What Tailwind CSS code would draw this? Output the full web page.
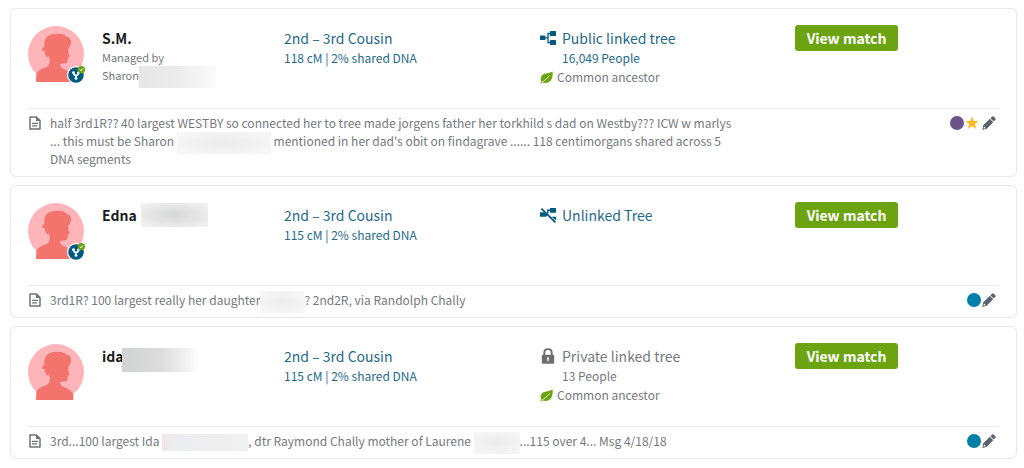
<!DOCTYPE html>
<html lang="en">

<head>
    <meta charset="UTF-8">
    <meta name="viewport" content="width=device-width, initial-scale=1.0">
    <title>DNA Matches</title>
    <script src="https://cdn.jsdelivr.net/npm/@tailwindcss/browser@4"></script>
</head>

<body class="bg-white font-['Noto_Sans_CJK_SC','Open_Sans',sans-serif] text-xs leading-[18px] text-[#75797e]">

    <!-- shared icons -->
    <svg class="hidden">
        <symbol id="icon-woman" viewBox="0 0 168 168">
            <clipPath id="avatar-clip">
                <circle cx="84" cy="84" r="84" />
            </clipPath>
            <circle cx="84" cy="84" r="84" fill="#fdb5ba" />
            <path clip-path="url(#avatar-clip)" fill="#f3736d"
                d="M84 24C99 22 110 26 116 32C126 34 131 42 129 52C129 60 123 63 121 69C120 75 121 80 122 84L125 91C124 94 120 94 120 96L119 101C118 106 118 110 113 112C107 114 100 112 97 114C94 122 104 128 112 131C124 136 132 142 136 150L136 168L24 168L25 143C30 133 44 127 56 123C64 119 65 112 65 105C65 100 65 96 62 91L58 95L54 89C50 85 51 79 50 75C45 76 42 74 41 71L46 70C42 69 42 64 47 64L50 63C48 56 48 46 53 38C59 28 71 24 84 24Z" />
        </symbol>
        <symbol id="icon-linked" viewBox="0 0 20 20">
            <circle cx="9" cy="11" r="9" fill="#fff" />
            <circle cx="9" cy="11" r="7.8" fill="#005a80" />
            <path d="M6.5 8.6Q6.6 11.2 9 11.6Q11.4 11.2 11.5 8.6M9 11V14.6" fill="none" stroke="#fff" stroke-width="1.6" />
            <circle cx="6.4" cy="8.6" r="1.4" fill="#fff" />
            <circle cx="11.6" cy="8.6" r="1.4" fill="#fff" />
            <circle cx="9" cy="14.4" r="1.4" fill="#fff" />
            <circle cx="14.4" cy="5.6" r="3.7" fill="#6ba410" />
            <path d="M12.9 5.8L14 6.8L16 4.5" fill="none" stroke="#fff" stroke-width="1" />
        </symbol>
        <symbol id="icon-tree" viewBox="0 0 16 14">
            <rect x="0" y="4.5" width="5.4" height="4.6" rx=".6" />
            <rect x="10" y="0" width="6" height="5" rx=".6" />
            <rect x="10" y="9" width="6" height="5" rx=".6" />
            <path d="M5 6.8H8M11 2.5H8V11.5H11" fill="none" stroke="currentColor" stroke-width="1.3" />
        </symbol>
        <symbol id="icon-unlinked" viewBox="0 0 16 16">
            <path d="M0 5.2H4L7.4 8.6L6 9.8H0.6Q0 9.8 0 9.2Z" />
            <rect x="10" y="1" width="6" height="4.8" rx=".6" />
            <path d="M11.6 9.8H15.4Q16 9.8 16 10.4V13.6Z" />
            <path d="M5.6 7H7.8M11 3.2H7.8V6.4" fill="none" stroke="currentColor" stroke-width="1.4" />
            <path d="M1.4 1.6L15.4 15.4" fill="none" stroke="currentColor" stroke-width="1.7" />
        </symbol>
        <symbol id="icon-lock" viewBox="0 0 14 16">
            <path d="M3.3 8V4.6Q3.3 1.1 7 1.1T10.7 4.6V8" fill="none" stroke="currentColor" stroke-width="1.9" />
            <rect x=".8" y="6.8" width="12.4" height="9" rx="1" />
            <path d="M7 9.2A1.2 1.2 0 0 1 7.6 11.4V13.2H6.4V11.4A1.2 1.2 0 0 1 7 9.2Z" fill="#fff" />
        </symbol>
        <symbol id="icon-leaf" viewBox="0 0 13 13">
            <path d="M12.6 .4C13 5 12.2 9 9 11C6.6 12.4 4 12 2.6 11.5L.8 12.8L.2 12.2L1.4 10.8C0 8 .4 5.4 3 3.6C5.6 1.8 9.4 2.4 12.6 .4Z" />
            <path d="M1.6 11.3C4.4 9.6 7.4 7.4 9.6 4.6" fill="none" stroke="#fff" stroke-width=".8" />
        </symbol>
        <symbol id="icon-note" viewBox="0 0 12 14">
            <path d="M1 1H7.4L11 4.6V13H1Z" fill="none" stroke="currentColor" stroke-width="1.5" stroke-linejoin="round" />
            <path d="M7 .8V5H11.2Z" />
            <path d="M3 7.3H9M3 9.9H8" fill="none" stroke="currentColor" stroke-width="1.2" />
        </symbol>
        <symbol id="icon-star" viewBox="0 0 14 14">
            <path d="M7 .3L8.7 5H13.7L9.7 8L11.2 13L7 10L2.8 13L4.3 8L.3 5H5.3Z" />
        </symbol>
        <symbol id="icon-pencil" viewBox="0 0 14 14">
            <path d="M8.4 2.3L10.2 .6Q11 0 11.7 .6L13.5 2.4Q14 3.1 13.4 3.8L11.7 5.6Z" />
            <path d="M7.8 2.8L11.2 6.2L4.8 12.7L.3 13.9L1.3 9.2Z" />
            <path d="M2 10.4L3.7 12.1L1.6 12.7Z" fill="#fff" />
        </symbol>
    </svg>

    <main class="flex flex-col gap-2 pt-2 pb-2 pl-2.5 pr-[7px]">

        <article class="border border-[#e6e7e8] rounded-md pl-[17px] pr-[18px]">
            <div class="grid grid-cols-[74px_182fr_256fr_255fr_203fr] items-start min-h-[99px] pt-4">
                <div class="relative w-14 mt-px">
                    <svg class="size-14"><use href="#icon-woman" /></svg>
                    <svg class="absolute -right-[3px] -bottom-0.5 size-5"><use href="#icon-linked" /></svg>
                </div>
                <div class="pt-[3px] text-[11px]">
                    <h2 class="text-sm leading-5 font-bold text-[#1b1c1e]">S.M.</h2>
                    <p>Managed by</p>
                    <p class="flex">Sharon<span class="w-[77px] h-[22px] bg-linear-to-r from-[#e6e6e6] via-[#ececec] to-[#fafafa]"></span></p>
                </div>
                <div class="pt-[3px] text-[#1f6a8a]">
                    <a href="#" class="block text-sm leading-5">2nd – 3rd Cousin</a>
                    <a href="#" class="block leading-5">118 cM | 2% shared DNA</a>
                </div>
                <div class="pt-[3px]">
                    <a href="#" class="flex items-center gap-1.5 text-sm leading-5 text-[#1f6a8a]">
                        <svg class="w-4 h-3.5 text-[#005a80] fill-current"><use href="#icon-tree" /></svg>
                        Public linked tree
                    </a>
                    <a href="#" class="block pl-[22px] leading-5 text-[#1f6a8a]">16,049 People</a>
                    <p class="flex items-center gap-1">
                        <svg class="size-[13px] fill-[#6ba410]"><use href="#icon-leaf" /></svg>
                        Common ancestor
                    </p>
                </div>
                <div>
                    <button type="button" class="w-[103px] h-[26px] rounded-[3px] bg-[#6ba410] text-sm leading-5 font-bold text-white">View match</button>
                </div>
            </div>
            <div class="flex items-start border-t border-[#e9eaeb] pt-[5px] pb-2">
                <svg class="shrink-0 w-3 h-3.5 mt-0.5 ml-px mr-[9px] text-[#6d737a] fill-current"><use href="#icon-note" /></svg>
                <p class="max-w-[688px]">half 3rd1R?? 40 largest WESTBY so connected her to tree made jorgens father her torkhild s dad on Westby??? ICW w marlys ... this must be Sharon <span class="inline-block w-[94px] h-[22px] -my-1 align-middle bg-radial from-[#ebebeb] to-[#f8f8f8]"></span> mentioned in her dad's obit on findagrave ...... 118 centimorgans shared across 5 DNA segments</p>
                <div class="flex items-center ml-auto h-[18px] gap-px pr-0.5">
                    <span class="size-3.5 rounded-full bg-[#6b5487]"></span>
                    <svg class="size-3.5 fill-[#ffb71b]"><use href="#icon-star" /></svg>
                    <button type="button" aria-label="Edit note" class="ml-0.5"><svg class="size-3.5 fill-[#5a646e]"><use href="#icon-pencil" /></svg></button>
                </div>
            </div>
        </article>

        <article class="border border-[#e6e7e8] rounded-md pl-[17px] pr-[18px]">
            <div class="grid grid-cols-[74px_182fr_256fr_255fr_203fr] items-start min-h-[99px] pt-4">
                <div class="relative w-14 mt-px">
                    <svg class="size-14"><use href="#icon-woman" /></svg>
                    <svg class="absolute -right-[3px] -bottom-0.5 size-5"><use href="#icon-linked" /></svg>
                </div>
                <div class="pt-[3px]">
                    <h2 class="flex items-center gap-1 text-sm leading-5 font-bold text-[#1b1c1e]">Edna<span class="w-[67px] h-6 -my-0.5 bg-radial from-[#d6d7d7] to-[#f3f3f3]"></span></h2>
                </div>
                <div class="pt-[3px] text-[#1f6a8a]">
                    <a href="#" class="block text-sm leading-5">2nd – 3rd Cousin</a>
                    <a href="#" class="block leading-5">115 cM | 2% shared DNA</a>
                </div>
                <div class="pt-[3px]">
                    <a href="#" class="flex items-center gap-1.5 text-sm leading-5 text-[#1f6a8a]">
                        <svg class="size-4 text-[#005a80] fill-current"><use href="#icon-unlinked" /></svg>
                        Unlinked Tree
                    </a>
                </div>
                <div>
                    <button type="button" class="w-[103px] h-[26px] rounded-[3px] bg-[#6ba410] text-sm leading-5 font-bold text-white">View match</button>
                </div>
            </div>
            <div class="flex items-start border-t border-[#e9eaeb] pt-[5px] pb-2">
                <svg class="shrink-0 w-3 h-3.5 mt-0.5 ml-px mr-[9px] text-[#6d737a] fill-current"><use href="#icon-note" /></svg>
                <p class="max-w-[688px]">3rd1R? 100 largest really her daughter<span class="inline-block w-11 h-[22px] -my-1 align-middle bg-radial from-[#ededed] to-[#f8f8f8]"></span>? 2nd2R, via Randolph Chally</p>
                <div class="flex items-center ml-auto h-[18px] gap-px pr-0.5">
                    <span class="size-3.5 rounded-full bg-[#007fa8]"></span>
                    <button type="button" aria-label="Edit note"><svg class="size-3.5 fill-[#5a646e]"><use href="#icon-pencil" /></svg></button>
                </div>
            </div>
        </article>

        <article class="border border-[#e6e7e8] rounded-md pl-[17px] pr-[18px]">
            <div class="grid grid-cols-[74px_182fr_256fr_255fr_203fr] items-start min-h-[99px] pt-4">
                <div class="relative w-14 mt-px">
                    <svg class="size-14"><use href="#icon-woman" /></svg>
                </div>
                <div class="pt-[3px]">
                    <h2 class="flex items-start text-sm leading-5 font-bold text-[#1b1c1e]">ida<span class="-ml-0.5 w-[79px] h-6 mt-0.5 bg-linear-to-r from-[#d0d3d2] via-[#dcdcdc] to-white"></span></h2>
                </div>
                <div class="pt-[3px] text-[#1f6a8a]">
                    <a href="#" class="block text-sm leading-5">2nd – 3rd Cousin</a>
                    <a href="#" class="block leading-5">115 cM | 2% shared DNA</a>
                </div>
                <div class="pt-[3px]">
                    <p class="flex items-center gap-1.5 text-sm leading-5">
                        <svg class="size-4 text-[#6e6e6e] fill-current"><use href="#icon-lock" /></svg>
                        Private linked tree
                    </p>
                    <p class="pl-[22px] leading-5">13 People</p>
                    <p class="flex items-center gap-1">
                        <svg class="size-[13px] fill-[#6ba410]"><use href="#icon-leaf" /></svg>
                        Common ancestor
                    </p>
                </div>
                <div>
                    <button type="button" class="w-[103px] h-[26px] rounded-[3px] bg-[#6ba410] text-sm leading-5 font-bold text-white">View match</button>
                </div>
            </div>
            <div class="flex items-start border-t border-[#e9eaeb] pt-[5px] pb-2">
                <svg class="shrink-0 w-3 h-3.5 mt-0.5 ml-px mr-[9px] text-[#6d737a] fill-current"><use href="#icon-note" /></svg>
                <p class="max-w-[688px]">3rd...100 largest Ida <span class="inline-block w-[86px] h-[17px] -my-1 align-middle bg-linear-to-r from-[#f3e4e2] via-[#ebecee] via-10% to-[#f0f0f0]"></span>, dtr Raymond Chally mother of Laurene <span class="inline-block w-[46px] h-[22px] -my-1 align-middle bg-radial from-[#ebebeb] to-[#f8f8f8]"></span>...115 over 4... Msg 4/18/18</p>
                <div class="flex items-center ml-auto h-[18px] gap-px pr-0.5">
                    <span class="size-3.5 rounded-full bg-[#007fa8]"></span>
                    <button type="button" aria-label="Edit note"><svg class="size-3.5 fill-[#5a646e]"><use href="#icon-pencil" /></svg></button>
                </div>
            </div>
        </article>

    </main>
</body>

</html>
